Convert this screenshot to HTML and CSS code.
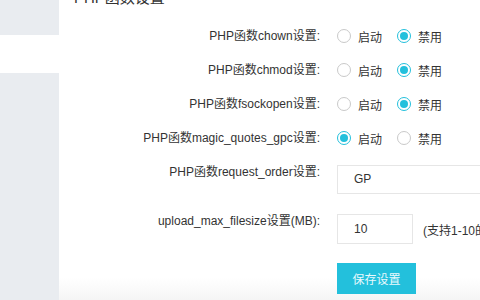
FILE: index.html
```html
<!DOCTYPE html>
<html lang="zh-CN">
<head>
<meta charset="utf-8">
<link rel="stylesheet" href="styles.css">
</head>
<body>
<div class="layout">
  <aside class="sidebar">
    <div class="nav-item"></div>
    <div class="nav-item active"></div>
    <div class="nav-item fill"></div>
  </aside>
  <main class="main">
    <h2 class="title">PHP函数设置</h2>
    <div class="form">
      <div class="row">
        <div class="label">PHP函数chown设置:</div>
        <div class="control">
          <span class="radio"><span class="dot"></span>启动</span>
          <span class="radio"><span class="dot on"></span>禁用</span>
        </div>
      </div>
      <div class="row">
        <div class="label">PHP函数chmod设置:</div>
        <div class="control">
          <span class="radio"><span class="dot"></span>启动</span>
          <span class="radio"><span class="dot on"></span>禁用</span>
        </div>
      </div>
      <div class="row">
        <div class="label">PHP函数fsockopen设置:</div>
        <div class="control">
          <span class="radio"><span class="dot"></span>启动</span>
          <span class="radio"><span class="dot on"></span>禁用</span>
        </div>
      </div>
      <div class="row">
        <div class="label">PHP函数magic_quotes_gpc设置:</div>
        <div class="control">
          <span class="radio"><span class="dot on"></span>启动</span>
          <span class="radio"><span class="dot"></span>禁用</span>
        </div>
      </div>
      <div class="row field select-row">
        <div class="label">PHP函数request_order设置:</div>
        <div class="control">
          <div class="select">GP</div>
        </div>
      </div>
      <div class="row field input-row">
        <div class="label">upload_max_filesize设置(MB):</div>
        <div class="control">
          <div class="input">10</div>
          <span class="hint">(支持1-10的整数)</span>
        </div>
      </div>
      <div class="row field btn-row">
        <div class="label"></div>
        <div class="control">
          <button class="btn">保存设置</button>
        </div>
      </div>
    </div>
  </main>
</div>
</body>
</html>
```

FILE: styles.css
```css
* { box-sizing: border-box; }
html, body {
  margin: 0;
  padding: 0;
  width: 480px;
  height: 300px;
  overflow: hidden;
  font-family: "Liberation Sans", "Noto Sans CJK SC", sans-serif;
  color: #333;
  background: #fff;
}
.layout {
  display: flex;
  height: 300px;
}
.sidebar {
  width: 59px;
  flex: none;
  display: flex;
  flex-direction: column;
  background: #e9ecf0;
}
.nav-item { height: 35px; }
.nav-item.active { height: 38px; background: #fff; }
.nav-item.fill { flex: 1; }
.main {
  flex: 1;
  min-width: 0;
  background: linear-gradient(to bottom, #fff 0, #fff 278px, #f5f5f5 300px);
}
.title {
  margin: -12px 0 0 15px;
  font-size: 15px;
  line-height: 20px;
  font-weight: normal;
  color: #333;
}
.form {
  padding-top: 11px;
}
.row {
  display: flex;
  align-items: center;
  height: 34px;
}
.label {
  width: 261px;
  flex: none;
  text-align: right;
  font-size: 12px;
  line-height: 14px;
  color: #333;
  white-space: nowrap;
}
.control {
  margin-left: 17px;
  display: flex;
  align-items: center;
  font-size: 12px;
  white-space: nowrap;
}
.radio {
  display: inline-flex;
  align-items: center;
  margin-right: 15px;
  color: #333;
}
.dot {
  width: 14px;
  height: 14px;
  border-radius: 50%;
  border: 1px solid #c9c9c9;
  margin-right: 7px;
  position: relative;
  background: #fff;
}
.dot.on { border-color: #23c0dc; }
.dot.on::after {
  content: "";
  position: absolute;
  left: 2px;
  top: 2px;
  width: 8px;
  height: 8px;
  border-radius: 50%;
  background: #23c0dc;
}
.field {
  height: auto;
  align-items: flex-start;
}
.select-row { margin-top: 10px; }
.input-row { margin-top: 20px; }
.btn-row { margin-top: 19px; }
.select {
  width: 200px;
  height: 29px;
  border: 1px solid #e6e6e6;
  padding-left: 16px;
  line-height: 27px;
  font-size: 12px;
  color: #333;
}
.input {
  width: 76px;
  height: 30px;
  border: 1px solid #e6e6e6;
  padding-left: 16px;
  line-height: 28px;
  font-size: 12px;
  color: #333;
}
.hint {
  margin-left: 10px;
  font-size: 12px;
  color: #333;
}
.btn {
  width: 79px;
  height: 31px;
  border: none;
  padding: 0;
  background: #23c0dc;
  color: #e9f9fc;
  font-family: "Liberation Sans", "Noto Sans CJK SC", sans-serif;
  font-size: 12px;
}
```
